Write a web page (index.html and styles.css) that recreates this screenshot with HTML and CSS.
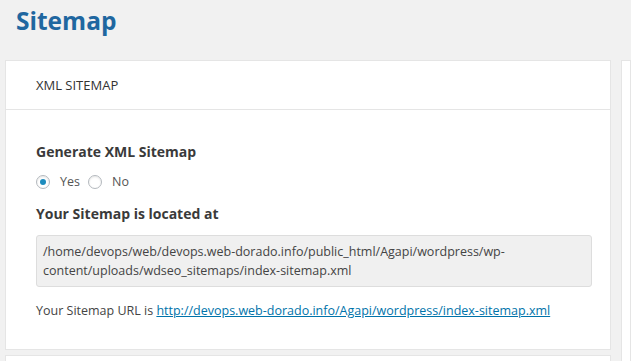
FILE: index.html
```html
<!DOCTYPE html>
<html lang="en">
<head>
    <meta charset="UTF-8">
    <meta name="viewport" content="width=device-width, initial-scale=1.0">
    <title>Sitemap</title>
    <link rel="stylesheet" href="styles.css">
</head>
<body>
    <h1 class="page-title">Sitemap</h1>
    <div class="columns">
        <div class="main-col">
            <div class="card">
                <div class="card-header">XML SITEMAP</div>
                <div class="card-body">
                    <label class="field-label">Generate XML Sitemap</label>
                    <div class="radios">
                        <span class="radio checked"></span><span class="radio-text">Yes</span>
                        <span class="radio"></span><span class="radio-text">No</span>
                    </div>
                    <label class="field-label">Your Sitemap is located at</label>
                    <div class="path-box">/home/devops/web/devops.web-dorado.info/public_html/Agapi/wordpress/wp-content/uploads/wdseo_sitemaps/index-sitemap.xml</div>
                    <p class="url-line">Your Sitemap URL is <a href="#">http://devops.web-dorado.info/Agapi/wordpress/index-sitemap.xml</a></p>
                </div>
            </div>
            <div class="card"></div>
        </div>
        <div class="side-col">
            <div class="card side-card"></div>
        </div>
    </div>
</body>
</html>
```

FILE: styles.css
```css
body {
    margin: 0;
    background-color: #f1f1f1;
    font-family: "Open Sans", sans-serif;
    color: #3c3c3c;
    height: 361px;
    overflow: hidden;
}
.page-title {
    margin: 0;
    padding: 6px 0 0 16px;
    height: 60px;
    box-sizing: border-box;
    font-size: 24.5px;
    line-height: 30px;
    font-weight: bold;
    color: #1f67a0;
}
.columns {
    display: flex;
    gap: 10px;
    padding-left: 5px;
}
.main-col {
    width: 606px;
    flex-shrink: 0;
}
.side-col {
    flex: 1;
}
.card {
    background-color: #fff;
    border: 1px solid #e5e5e5;
    margin-bottom: 5px;
    min-height: 40px;
}
.side-card {
    min-height: 400px;
}
.card-header {
    height: 48px;
    line-height: 48px;
    padding-left: 30px;
    font-size: 13px;
    border-bottom: 1px solid #e5e5e5;
    color: #333;
}
.card-body {
    padding: 32px 18px 30px 30px;
}
.field-label {
    display: block;
    font-weight: bold;
    font-size: 14px;
    color: #3a3a3a;
}
.radios {
    display: flex;
    align-items: center;
    margin: 12px 0 14px;
    font-size: 12.5px;
    color: #555;
}
.radio {
    width: 14px;
    height: 14px;
    border: 1px solid #b4b9be;
    border-radius: 50%;
    box-sizing: border-box;
    box-shadow: inset 0 1px 2px rgba(0,0,0,0.1);
    display: inline-flex;
    align-items: center;
    justify-content: center;
}
.radio.checked::after {
    content: "";
    width: 6px;
    height: 6px;
    border-radius: 50%;
    background-color: #1e8cbe;
}
.radio-text {
    margin: 0 8px 0 10px;
}
.path-box {
    margin-top: 12px;
    background-color: #f0f0f0;
    border: 1px solid #ddd;
    border-radius: 3px;
    padding: 6px;
    font-size: 12.5px;
    line-height: 19px;
    color: #444;
}
.url-line {
    margin: 15px 0 0;
    font-size: 12.5px;
    color: #444;
}
.url-line a {
    color: #0073aa;
}
```
